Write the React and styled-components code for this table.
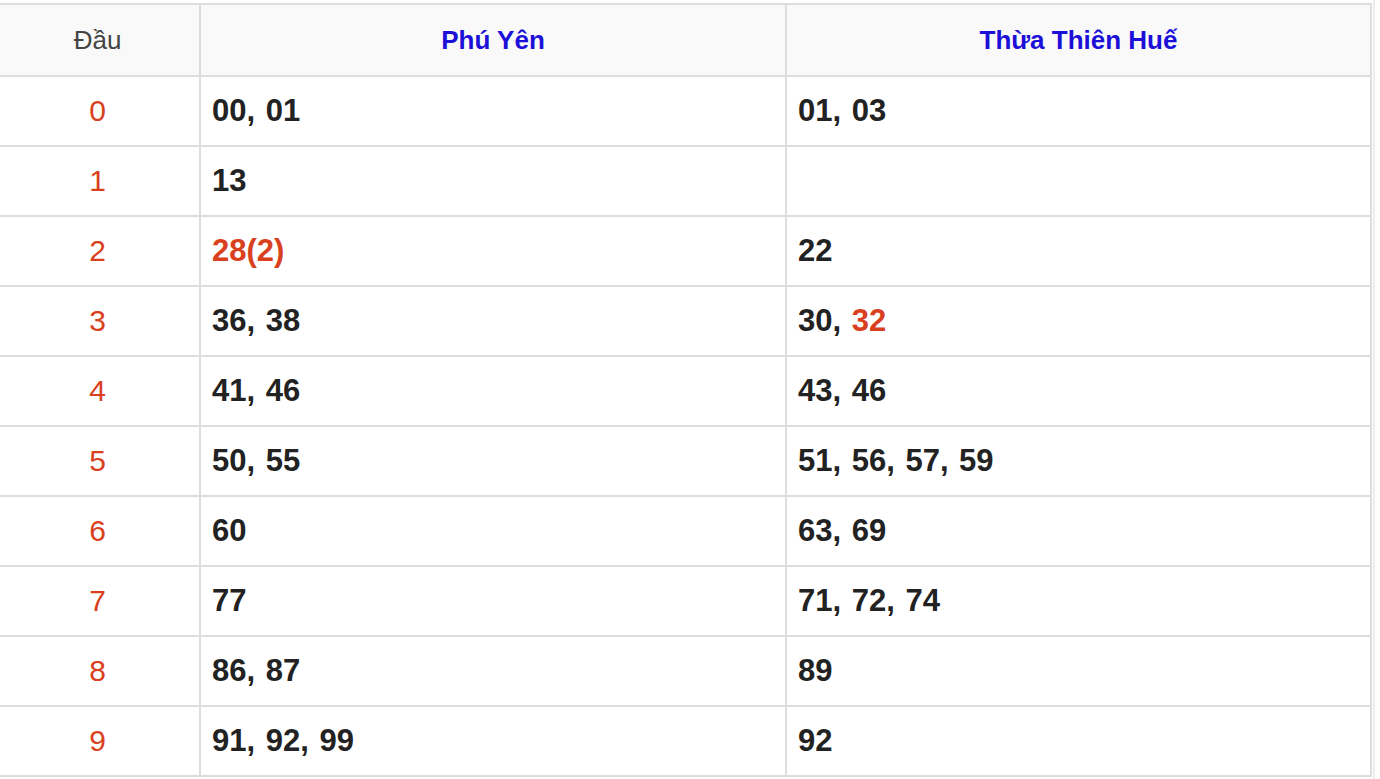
import React from 'react';
import styled, { createGlobalStyle } from 'styled-components';

const GlobalStyle = createGlobalStyle`
  html, body {
    margin: 0;
    padding: 0;
    background: #fff;
    font-family: "Liberation Sans", Arial, sans-serif;
    overflow: hidden;
  }
`;

const Wrapper = styled.div`
  width: fit-content;
  min-height: 779px;
  margin-left: -2px;
  padding: 3px 1px 0 0;
  border-right: 2px solid #ececec;
  box-sizing: border-box;
`;

const Table = styled.table`
  border-collapse: separate;
  border-spacing: 0;
  table-layout: fixed;
  border-top: 2px solid #dddddd;
  border-left: 2px solid #dddddd;
`;

const HeadCell = styled.th`
  height: 70px;
  padding: 0 ${(p) => (p.$province ? 0 : 4)}px 0 0;
  background: #f9f9f9;
  border-right: 2px solid #dddddd;
  border-bottom: 2px solid #dddddd;
  font-size: 26px;
  font-weight: ${(p) => (p.$province ? 700 : 400)};
  color: ${(p) => (p.$province ? '#1c0fd8' : '#444')};
  text-align: center;
  vertical-align: middle;
`;

const Cell = styled.td`
  height: 68px;
  padding: 0 0 0 11px;
  border-right: 2px solid #dddddd;
  border-bottom: 2px solid #dddddd;
  font-size: 31px;
  font-weight: 700;
  word-spacing: 2px;
  color: #222;
  vertical-align: middle;
  white-space: nowrap;
`;

const HeadDigit = styled(Cell)`
  padding: 0 4px 0 0;
  text-align: center;
  font-size: 30px;
  font-weight: 400;
  color: #d9401d;
`;

const Hot = styled.span`
  color: #d9401d;
`;

const rows = [
  ['00, 01', '01, 03'],
  ['13', ''],
  [[{ v: '28(2)', hot: true }], '22'],
  ['36, 38', [{ v: '30, ' }, { v: '32', hot: true }]],
  ['41, 46', '43, 46'],
  ['50, 55', '51, 56, 57, 59'],
  ['60', '63, 69'],
  ['77', '71, 72, 74'],
  ['86, 87', '89'],
  ['91, 92, 99', '92'],
];

function Numbers({ value }) {
  if (typeof value === 'string') return value;
  return value.map((part, i) =>
    part.hot ? <Hot key={i}>{part.v}</Hot> : <span key={i}>{part.v}</span>
  );
}

export default function App() {
  return (
    <>
      <GlobalStyle />
      <Wrapper>
        <Table>
          <colgroup>
            <col style={{ width: 201 }} />
            <col style={{ width: 586 }} />
            <col style={{ width: 585 }} />
          </colgroup>
          <thead>
            <tr>
              <HeadCell>Đầu</HeadCell>
              <HeadCell $province>Phú Yên</HeadCell>
              <HeadCell $province>Thừa Thiên Huế</HeadCell>
            </tr>
          </thead>
          <tbody>
            {rows.map((r, i) => (
              <tr key={i}>
                <HeadDigit>{i}</HeadDigit>
                <Cell>
                  <Numbers value={r[0]} />
                </Cell>
                <Cell>
                  <Numbers value={r[1]} />
                </Cell>
              </tr>
            ))}
          </tbody>
        </Table>
      </Wrapper>
    </>
  );
}
